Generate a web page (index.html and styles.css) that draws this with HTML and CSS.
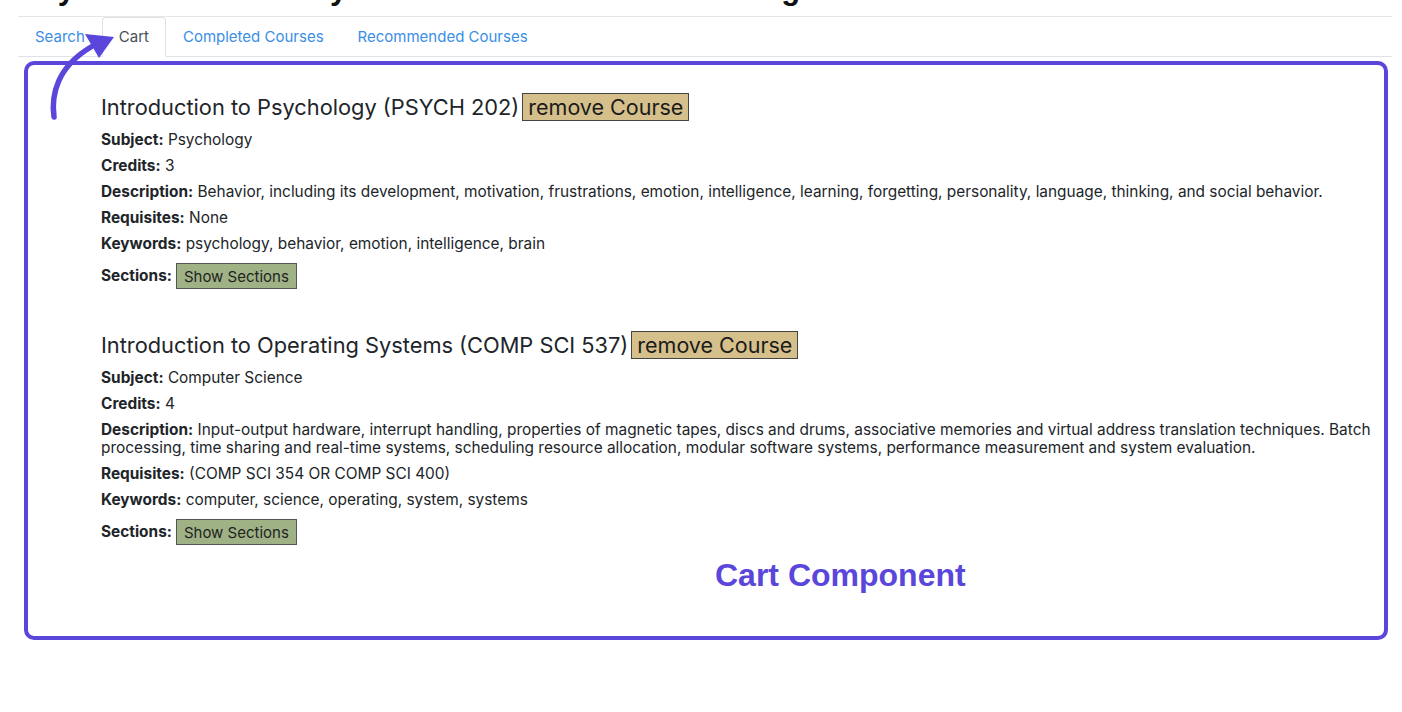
FILE: index.html
```html
<!DOCTYPE html>
<html lang="en">

<head>
  <meta charset="UTF-8">
  <meta name="viewport" content="width=device-width, initial-scale=1.0">
  <title>Cart Component</title>
  <link rel="stylesheet" href="styles.css">
</head>

<body>

  <!-- Slide heading, cropped at the top of the shot -->
  <h1 class="page-title">My Cart Functionality: Shows all courses I’m adding to the cart</h1>

  <!-- Tabs -->
  <ul class="tabs">
    <li><a class="tab-link" href="#">Search</a></li>
    <li><a class="tab-link active" href="#">Cart</a></li>
    <li><a class="tab-link" href="#">Completed Courses</a></li>
    <li><a class="tab-link" href="#">Recommended Courses</a></li>
  </ul>

  <!-- Cart component, outlined -->
  <div class="cart-box">
    <div class="course">
      <div class="course-title">Introduction to Psychology (PSYCH 202)<button class="btn-remove">remove Course</button></div>
      <p><strong>Subject:</strong> Psychology</p>
      <p><strong>Credits:</strong> 3</p>
      <p><strong>Description:</strong> Behavior, including its development, motivation, frustrations, emotion, intelligence, learning, forgetting, personality, language, thinking, and social behavior.</p>
      <p><strong>Requisites:</strong> None</p>
      <p><strong>Keywords:</strong> psychology, behavior, emotion, intelligence, brain</p>
      <p class="sections"><strong>Sections:</strong> <button class="btn-sections">Show Sections</button></p>
    </div>

    <div class="course">
      <div class="course-title">Introduction to Operating Systems (COMP SCI 537)<button class="btn-remove">remove Course</button></div>
      <p><strong>Subject:</strong> Computer Science</p>
      <p><strong>Credits:</strong> 4</p>
      <p><strong>Description:</strong> Input-output hardware, interrupt handling, properties of magnetic tapes, discs and drums, associative memories and virtual address translation techniques. Batch processing, time sharing and real-time systems, scheduling resource allocation, modular software systems, performance measurement and system evaluation.</p>
      <p><strong>Requisites:</strong> (COMP SCI 354 OR COMP SCI 400)</p>
      <p><strong>Keywords:</strong> computer, science, operating, system, systems</p>
      <p class="sections"><strong>Sections:</strong> <button class="btn-sections">Show Sections</button></p>
    </div>

    <div class="annotation-label">Cart Component</div>
  </div>

  <!-- Arrow pointing at the Cart tab -->
  <svg class="arrow" viewBox="0 0 140 130" width="140" height="130">
    <path class="arrow-shaft" d="M54,117 C51,95 57,67 91,47" />
    <path class="arrow-head" d="M114,37 L85,34 L99,58 Z" />
  </svg>

</body>

</html>
```

FILE: styles.css
```css
body {
  margin: 0;
  font-family: Inter, "Liberation Sans", sans-serif;
  color: #212529;
  background: #fff;
  position: relative;
}

.page-title {
  margin: -29px 0 0 32px;
  font-family: "Liberation Sans", Arial, sans-serif;
  font-size: 31px;
  line-height: 36px;
  font-weight: bold;
  color: #111;
  white-space: nowrap;
}

.tabs {
  display: flex;
  list-style: none;
  margin: 9px 10px 0 18px;
  padding: 0;
  border-top: 1px solid #e6e6e6;
  border-bottom: 1px solid #dee2e6;
}

.tab-link {
  display: block;
  margin-bottom: -1px;
  padding: 8px 16px;
  font-size: 15px;
  line-height: 22px;
  color: #3a8ee6;
  text-decoration: none;
  border: 1px solid transparent;
  border-top-left-radius: 4px;
  border-top-right-radius: 4px;
}

.tab-link.active {
  color: #495057;
  background: #fff;
  border-color: #dee2e6 #dee2e6 #fff;
}

.cart-box {
  margin: 4px 14px 0 24px;
  padding: 28px 6px 44px 73px;
  border: 4px solid #5b46db;
  border-radius: 10px;
}

.course + .course {
  margin-top: 40px;
}

.course-title {
  display: flex;
  align-items: center;
  height: 28px;
  margin-bottom: 10px;
  font-size: 21.8px;
}

.btn-remove {
  margin-left: 3px;
  padding: 0 5px;
  height: 28px;
  font-family: inherit;
  font-size: 21.5px;
  color: #1b1b1b;
  background: #d5bf8b;
  border: 1px solid #444;
}

p {
  margin: 0 0 8px;
  font-size: 15.4px;
  line-height: 18px;
}

p.sections {
  display: flex;
  align-items: center;
  gap: 4px;
  min-height: 30px;
  margin-bottom: 0;
}

.btn-sections {
  padding: 0 7px;
  height: 26px;
  font-family: inherit;
  font-size: 15px;
  color: #1f1f1f;
  background: #9fb286;
  border: 1px solid #555;
}

.annotation-label {
  margin: 11px 0 0 614px;
  font-family: "Liberation Sans", Arial, sans-serif;
  font-size: 32px;
  line-height: 34px;
  font-weight: bold;
  color: #5b46db;
}

.arrow {
  position: absolute;
  top: 0;
  left: 0;
}

.arrow-shaft {
  fill: none;
  stroke: #5b46db;
  stroke-width: 5.5;
  stroke-linecap: round;
}

.arrow-head {
  fill: #5b46db;
}
```
